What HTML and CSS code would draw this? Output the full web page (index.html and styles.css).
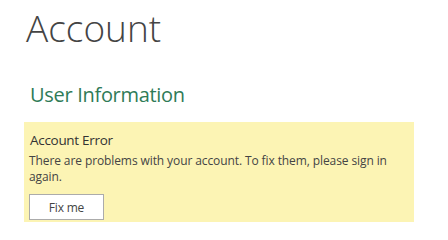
FILE: index.html
```html
<!DOCTYPE html>
<html>
<head>
<meta charset="utf-8">
<link rel="stylesheet" href="styles.css">
</head>
<body>
<main class="page">
  <h1 class="title">Account</h1>
  <h2 class="section">User Information</h2>
  <div class="alert">
    <div class="alert-title">Account Error</div>
    <p class="alert-text">There are problems with your account. To fix them, please sign in again.</p>
    <button class="btn">Fix me</button>
  </div>
</main>
</body>
</html>
```
FILE: styles.css
```css
html, body {
  margin: 0;
  padding: 0;
  background: #ffffff;
}
body {
  font-family: "Open Sans", "Noto Sans", sans-serif;
  color: #444444;
}
.page {
  padding: 6px 0 0 24px;
  display: flex;
  flex-direction: column;
  align-items: flex-start;
}
.title {
  margin: 0 0 0 2px;
  font-size: 37px;
  line-height: 44px;
  font-weight: 300;
  color: #444444;
}
.section {
  margin: 32px 0 0 6px;
  font-size: 20px;
  line-height: 26px;
  letter-spacing: -0.3px;
  font-weight: 400;
  color: #2f7b57;
}
.alert {
  margin-top: 14px;
  width: 390px;
  box-sizing: border-box;
  height: 100px;
  padding: 9px 5px 2px 5px;
  background: #fcf4b4;
  display: flex;
  flex-direction: column;
  align-items: flex-start;
}
.alert-title {
  font-size: 13.5px;
  line-height: 18px;
  letter-spacing: -0.3px;
  color: #333333;
  padding-left: 1px;
}
.alert-text {
  margin: 4px 0 0 0;
  font-size: 12px;
  line-height: 15.5px;
  letter-spacing: -0.1px;
  color: #444444;
  width: 365px;
}
.btn {
  margin-top: 10px;
  width: 75px;
  height: 26px;
  box-sizing: border-box;
  background: #ffffff;
  border: 1px solid #ababab;
  font-family: "Open Sans", "Noto Sans", sans-serif;
  font-size: 12px;
  letter-spacing: -0.2px;
  color: #444444;
  padding: 0;
}
```
